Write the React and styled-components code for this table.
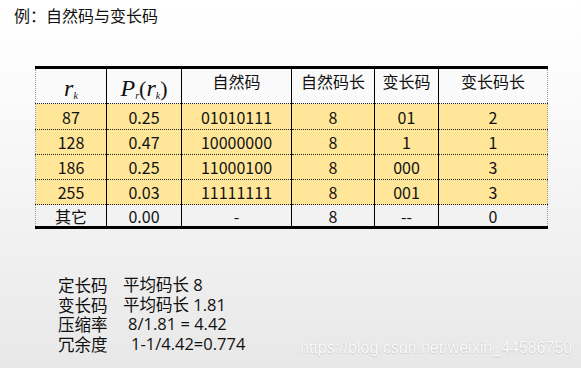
import React from "react";
import styled, { createGlobalStyle } from "styled-components";

const GlobalStyle = createGlobalStyle`
  html, body {
    margin: 0;
    padding: 0;
  }
  body {
    font-family: "Noto Sans CJK SC", "Noto Sans", sans-serif;
    color: #111;
  }
`;

const Page = styled.div`
  position: relative;
  width: 581px;
  height: 368px;
  overflow: hidden;
  background: linear-gradient(#ffffff 0%, #fbfbfb 25%, #e8e8e8 100%);
  padding: 5px 0 0 14px;
  box-sizing: border-box;
`;

const Title = styled.div`
  font-size: 16px;
  line-height: 20px;
  height: 20px;
`;

const Table = styled.table`
  margin: 41px 0 0 21px;
  border-collapse: collapse;
  table-layout: fixed;
  width: 512px;
  border-top: 3px solid #000;
  border-bottom: 3px solid #000;
  border-left: 1px dotted #999;
  border-right: 1px dotted #999;
`;

const HeadCell = styled.th`
  width: ${({ $w }) => $w}px;
  height: 36px;
  padding: ${({ $math }) => ($math ? "6px 0 0" : "2px 0 0")};
  vertical-align: top;
  font-weight: normal;
  font-size: 16px;
  line-height: 20px;
  text-align: center;
  background: #fafafa;
  border-left: 1px solid #000;
  border-bottom: 1px dotted #222;
  box-sizing: border-box;
  &:first-child {
    border-left: none;
  }
`;

const Row = styled.tr`
  background: ${({ $other }) => ($other ? "#f2f2f2" : "#ffe699")};
`;

const Cell = styled.td`
  height: ${({ $h }) => $h}px;
  padding: 0;
  text-align: center;
  vertical-align: middle;
  font-size: 16px;
  line-height: 18px;
  border-left: 1px solid #000;
  border-bottom: 1px dotted #222;
  box-sizing: border-box;
  &:first-child {
    border-left: none;
  }
  tr:last-child > & {
    border-bottom: none;
  }
`;

const MathText = styled.span`
  font-family: "Liberation Serif", serif;
  font-style: italic;
  font-size: 24px;
  line-height: 26px;
  white-space: nowrap;
`;

const Sub = styled.sub`
  font-size: 10px;
  vertical-align: -3px;
  line-height: 0;
`;

const Paren = styled.span`
  font-style: normal;
  font-size: 22px;
`;

const Summary = styled.div`
  margin: 47px 0 0 44px;
  display: grid;
  grid-template-columns: 65px auto;
  grid-auto-rows: 19.7px;
  font-size: 16.5px;
  line-height: 18px;
`;

const Label = styled.div`
  white-space: nowrap;
`;

const Value = styled.div`
  padding-left: ${({ $indent }) => $indent}px;
  white-space: pre;
  font-family: "Open Sans", "Noto Sans CJK SC", sans-serif;
`;

const Watermark = styled.div`
  position: absolute;
  left: 300px;
  top: 339px;
  font-family: "Liberation Sans", Arial, sans-serif;
  font-size: 16px;
  color: #fbfbfb;
  text-shadow: 0 0 1px #c4c4c4, 0 1px 1px #d0d0d0;
`;

const columns = [71, 75, 110, 83, 64, 109];

const rows = [
  ["87", "0.25", "01010111", "8", "01", "2"],
  ["128", "0.47", "10000000", "8", "1", "1"],
  ["186", "0.25", "11000100", "8", "000", "3"],
  ["255", "0.03", "11111111", "8", "001", "3"],
];

const other = ["其它", "0.00", "-", "8", "--", "0"];

const summary = [
  ["定长码", "平均码长 8", 0],
  ["变长码", "平均码长 1.81", 0],
  ["压缩率", "8/1.81 = 4.42", 5],
  ["冗余度", "1-1/4.42=0.774", 8],
];

const heights = [26, 25, 25, 25];

export default function App() {
  return (
    <>
      <GlobalStyle />
      <Page>
        <Title>例：自然码与变长码</Title>
        <Table>
          <thead>
            <tr>
              <HeadCell $w={columns[0]} $math>
                <MathText>
                  r<Sub>k</Sub>
                </MathText>
              </HeadCell>
              <HeadCell $w={columns[1]} $math>
                <MathText>
                  P<Sub>r</Sub>
                  <Paren>(</Paren>r<Sub>k</Sub>
                  <Paren>)</Paren>
                </MathText>
              </HeadCell>
              <HeadCell $w={columns[2]}>自然码</HeadCell>
              <HeadCell $w={columns[3]}>自然码长</HeadCell>
              <HeadCell $w={columns[4]}>变长码</HeadCell>
              <HeadCell $w={columns[5]}>变长码长</HeadCell>
            </tr>
          </thead>
          <tbody>
            {rows.map((row, i) => (
              <Row key={i}>
                {row.map((v, j) => (
                  <Cell key={j} $h={heights[i]}>
                    {v}
                  </Cell>
                ))}
              </Row>
            ))}
            <Row $other>
              {other.map((v, j) => (
                <Cell key={j} $h={23}>
                  {v}
                </Cell>
              ))}
            </Row>
          </tbody>
        </Table>
        <Summary>
          {summary.map(([label, value, indent]) => (
            <React.Fragment key={label}>
              <Label>{label}</Label>
              <Value $indent={indent}>{value}</Value>
            </React.Fragment>
          ))}
        </Summary>
        <Watermark>https://blog.csdn.net/weixin_44586750</Watermark>
      </Page>
    </>
  );
}
